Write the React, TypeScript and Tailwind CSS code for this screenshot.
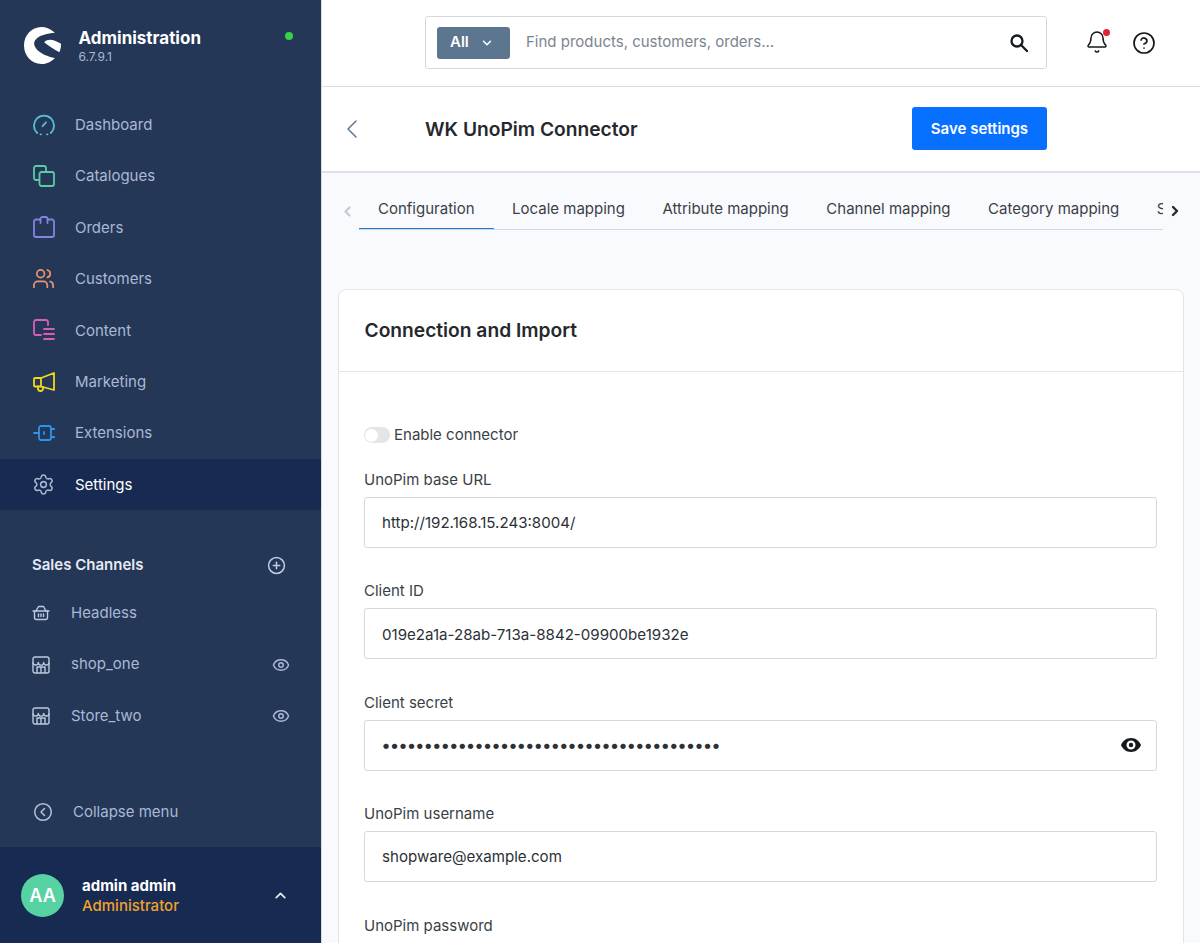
import React from "react";
import { ChevronDown, ChevronUp, Bell, CircleHelp, Settings, Users, PlusCircle, Eye } from "lucide-react";

const S = (p: { children: React.ReactNode; c: string }) => (
  <svg width="22" height="22" viewBox="0 0 22 22" fill="none" stroke={p.c} strokeWidth="1.8" strokeLinecap="round" strokeLinejoin="round">{p.children}</svg>
);

const StoreIcon = () => (
  <svg width="18" height="18" viewBox="0 0 18 18" fill="none" stroke="#bccae0" strokeWidth="1.4" strokeLinejoin="round">
    <rect x="1" y="1" width="16" height="16" rx="2" />
    <path d="M1 6.500a2.670 2.670 0 0 0 5.330 0a2.670 2.670 0 0 0 5.340 0a2.670 2.670 0 0 0 5.330 0" />
    <path d="M5 17v-6h8v6M9 11v6" />
  </svg>
);

const BasketIcon = () => (
  <svg width="18" height="18" viewBox="0 0 18 18" fill="none" stroke="#bccae0" strokeWidth="1.4" strokeLinecap="round" strokeLinejoin="round">
    <path d="M1 7h16" />
    <path d="M2.500 7v6.500a2 2 0 0 0 2 2h9a2 2 0 0 0 2-2V7" />
    <path d="M4 7l2.500-4.500h5L14 7" />
    <path d="M6.500 10v2.500M9 10v2.500M11.500 10v2.500" />
  </svg>
);

const nav: { label: string; active?: boolean; icon: React.ReactNode }[] = [
  { label: "Dashboard", icon: <S c="#58bdd6"><path d="M4.300 19A10 10 0 1 1 17.700 19" /><path d="M7.500 20.300h.5M14 20.300h.5" /><path d="M9.600 12.200l3.400-3.900" /></S> },
  { label: "Catalogues", icon: <S c="#5ccba3"><path d="M6 15H3a2 2 0 0 1-2-2V3a2 2 0 0 1 2-2h8a2 2 0 0 1 2 2v3" /><rect x="6.500" y="7" width="14.500" height="14" rx="2" /></S> },
  { label: "Orders", icon: <S c="#8383e0"><path d="M7 3.500H3a2 2 0 0 0-2 2V19a2 2 0 0 0 2 2h16a2 2 0 0 0 2-2V5.500a2 2 0 0 0-2-2h-4" /><path d="M7.500 7V3a2 2 0 0 1 2-2h3a2 2 0 0 1 2 2v4" /></S> },
  { label: "Customers", icon: <Users size={23} color="#e8956f" strokeWidth={1.8} /> },
  { label: "Content", icon: <S c="#d85fb8"><path d="M15 6V3a2 2 0 0 0-2-2H3a2 2 0 0 0-2 2v11a2 2 0 0 0 2 2h5" /><path d="M11 10h10M11 15h10M11 20h10" /></S> },
  { label: "Marketing", icon: <S c="#f2d91c"><path d="M21 2v17L8 15.500H2a1 1 0 0 1-1-1V8a1 1 0 0 1 1-1h6z" /><path d="M8 7v8.500" /><path d="M5 15.500v2a2.500 2.500 0 0 0 5 0V16" /></S> },
  { label: "Extensions", icon: <S c="#2b94ee"><rect x="6" y="4" width="12" height="14" rx="2" /><path d="M1 11h5M18 7h3.500M18 15h3.500" /><path d="M11 10v2" /></S> },
  { label: "Settings", active: true, icon: <Settings size={23} color="#a9b8cf" strokeWidth={1.6} /> },
];

function Field({ label, value, eye, mono }: { label: string; value: string; eye?: boolean; mono?: boolean }) {
  return (
    <div className="h-[111.4px] shrink-0">
      <div className="h-[28px] text-[15px] leading-[22px] text-[#3a3f46]">{label}</div>
      <div className="h-[51px] border border-[#d5d9dd] rounded-[3px] bg-white flex items-center justify-between pl-[17px] pr-[15px] text-[15.1px] text-[#2b3136]">
        <span className={mono ? "tracking-[0.4px] text-[17px] font-bold" : "pt-[2px]"}>{value}</span>
        {eye && (
          <svg width="20" height="14" viewBox="0 0 20 14"><path fill="#15191d" fillRule="evenodd" d="M10 0C5.500 0 1.700 2.800 0 7c1.700 4.200 5.500 7 10 7s8.300-2.800 10-7c-1.700-4.200-5.500-7-10-7zm0 11.500a4.500 4.500 0 1 1 0-9 4.500 4.500 0 0 1 0 9zM10 4.800a2.200 2.200 0 1 0 0 4.400 2.200 2.200 0 0 0 0-4.400z" /></svg>
        )}
      </div>
    </div>
  );
}

export default function App() {
  return (
    <div className="w-[1200px] h-[943px] overflow-hidden flex bg-[#f9fafd] text-[#2b3136]" style={{ fontFamily: "Inter, 'Liberation Sans', sans-serif" }}>
      <aside className="w-[322px] shrink-0 h-full bg-[#243757] border-r border-[#d5dae0] flex flex-col text-[#a9b9d6]">
        <div className="h-[99px] shrink-0 flex items-start pl-[24px] pr-[28px] pt-[27px]">
          <svg width="37" height="37" viewBox="73 80 110 110" fill="#fff" className="shrink-0">
            <path d="M165 97C150 85 137 80 125 80C95 80 73 105 73 135C73 165 95 190 125 190C140 190 155 183 165 172C145 168 105 155 103 128C105 110 130 100 165 97Z" />
            <path d="M133 125C145 112 165 118 183 130C183 140 182 148 178 155C160 145 145 135 133 125Z" />
          </svg>
          <div className="ml-[17.500px] flex-1">
            <div className="text-[17px] font-bold text-white leading-[20px] mt-[1px]">Administration</div>
            <div className="text-[12px] leading-[16px] mt-[1px]">6.7.9.1</div>
          </div>
          <div className="w-[8px] h-[8px] rounded-full bg-[#37d046] mt-[5px]" />
        </div>

        {nav.map((n) => (
          <div key={n.label} className={`h-[51.4px] shrink-0 flex items-center pl-[32px] text-[15px] ${n.active ? "bg-[#172a52] text-white" : ""}`}>
            <span className="w-[23px] flex justify-center">{n.icon}</span>
            <span className="ml-[20px] pt-[1px]">{n.label}</span>
          </div>
        ))}

        <div className="mt-[32.500px] h-[45px] shrink-0 flex items-center justify-between pl-[32px] pr-[35px] text-[15px] font-semibold text-[#e4eaf3]">
          <span className="pt-[1px]">Sales Channels</span>
          <PlusCircle size={19} color="#bccbe3" strokeWidth={1.9} />
        </div>
        {[
          { t: "Headless", ic: <BasketIcon /> },
          { t: "shop_one", ic: <StoreIcon />, eye: true },
          { t: "Store_two", ic: <StoreIcon />, eye: true },
        ].map((r) => (
          <div key={r.t} className="h-[51.4px] shrink-0 flex items-center pl-[32px] pr-[31px] text-[15px]">
            <span className="w-[18px] flex justify-center">{r.ic}</span>
            <span className="ml-[21px] flex-1">{r.t}</span>
            {r.eye && <Eye size={18} color="#a9b9d6" strokeWidth={2} />}
          </div>
        ))}

        <div className="mt-auto h-[52px] shrink-0 flex items-center pl-[33px] text-[15px] mb-[9px]">
          <svg width="20" height="20" viewBox="0 0 20 20" fill="none" stroke="#b4c2d8" strokeWidth="1.5" strokeLinecap="round" strokeLinejoin="round"><circle cx="10" cy="10" r="8.300" /><path d="M11.500 6.500L8 10l3.500 3.500" /></svg>
          <span className="ml-[20px]">Collapse menu</span>
        </div>
        <div className="h-[96px] shrink-0 bg-[#172a52] flex items-center pl-[21px] pr-[32px]">
          <div className="w-[43px] h-[43px] rounded-full bg-[#57d2a2] text-white font-semibold text-[18px] flex items-center justify-center">AA</div>
          <div className="ml-[18px] flex-1 pt-[1px]">
            <div className="text-[15px] font-bold text-white leading-[20px]">admin admin</div>
            <div className="text-[15px] text-[#f0a22c] leading-[20px] font-medium">Administrator</div>
          </div>
          <ChevronUp size={17} color="#dfe6f0" strokeWidth={2.6} />
        </div>
      </aside>

      <main className="flex-1 h-full flex flex-col min-w-0">
        <header className="h-[87px] shrink-0 bg-white border-b border-[#d9dde2] flex items-start pt-[16px] pl-[103px]">
          <div className="w-[622px] h-[53px] border border-[#d5d9dd] rounded-[3px] flex items-center pl-[11px] pr-[17px]">
            <div className="w-[73px] h-[32px] bg-[#5d7690] rounded-[3px] text-white text-[15px] font-semibold flex items-center pl-[13px] gap-[11px]">
              All <ChevronDown size={14} strokeWidth={2.6} />
            </div>
            <span className="ml-[16px] flex-1 text-[15px] text-[#7b858f]">Find products, customers, orders...</span>
            <svg width="20" height="20" viewBox="0 0 20 20" fill="none" stroke="#15191d" strokeWidth="2.300" strokeLinecap="round"><circle cx="8" cy="8" r="5.500" /><path d="M12.300 12.300L18 18" /></svg>
          </div>
          <div className="relative ml-[38px] mt-[14px]">
            <Bell size={24} color="#15191d" strokeWidth={1.5} />
            <span className="absolute right-[-1px] top-[-1px] w-[7px] h-[7px] rounded-full bg-[#e3212f]" />
          </div>
          <CircleHelp size={24} color="#15191d" strokeWidth={1.7} className="ml-[23px] mt-[15px]" />
        </header>

        <div className="h-[86px] shrink-0 bg-white border-b-2 border-[#dfe3e7] flex items-center pl-[24px] pb-[1px]">
          <svg width="12" height="18" viewBox="0 0 12 18" fill="none" stroke="#5d7690" strokeWidth="1.500" strokeLinecap="round" strokeLinejoin="round" className="shrink-0"><path d="M10 1L2 9l8 8" /></svg>
          <h1 className="ml-[67px] flex-1 text-[19.2px] font-semibold text-[#25292d] pt-[2px]">WK UnoPim Connector</h1>
          <button className="w-[135px] h-[43px] mr-[153px] rounded-[3px] bg-[#0870ff] text-white text-[15px] font-semibold pt-[1px]">Save settings</button>
        </div>

        <div className="flex items-start pl-[18px] h-[57px] shrink-0">
          <svg width="15" height="15" viewBox="0 0 15 15" fill="none" stroke="#c3c9d0" strokeWidth="2.200" strokeLinecap="round" strokeLinejoin="round" className="mt-[31px] shrink-0"><path d="M9.500 3.500L5.500 7.500l4 4" /></svg>
          <div className="w-[804px] shrink-0 h-[57px] border-b border-[#d3d8dd] flex overflow-hidden text-[15px] text-[#3a3f46] ml-[4px]">
            {["Configuration", "Locale mapping", "Attribute mapping", "Channel mapping", "Category mapping", "Settings"].map((t, i) => (
              <div key={t} className={`shrink-0 h-[57px] px-[19px] ${i === 0 ? "border-b-2 border-[#1a78d6]" : "ml-[-0.500px]"} pt-[25px] leading-[22px] whitespace-nowrap`}>{t}</div>
            ))}
          </div>
          <svg width="16" height="16" viewBox="0 0 16 16" fill="none" stroke="#25292d" strokeWidth="2.400" strokeLinecap="round" strokeLinejoin="round" className="mt-[30px] ml-[4px] shrink-0"><path d="M6 4l4 4-4 4" /></svg>
        </div>

        <section className="ml-[16px] w-[846px] mt-[59px] shrink-0 bg-white border border-[#e2e5e9] rounded-[8px]">
          <div className="h-[82px] border-b border-[#e2e5e9] flex items-center pl-[25.500px] text-[19.2px] font-semibold text-[#25292d]">Connection and Import</div>
          <div className="pl-[25px] pr-[26px] pt-[52px]">
            <div className="flex items-center h-[22px] text-[15px] text-[#3a3f46] mb-[23px]">
              <span className="w-[26px] h-[16px] rounded-full bg-[#e3e5e8] flex items-center pl-[1px]"><span className="w-[13px] h-[13px] rounded-full bg-white" /></span>
              <span className="ml-[4px]">Enable connector</span>
            </div>
            <div className="flex flex-col">
              <Field label="UnoPim base URL" value="http://192.168.15.243:8004/" />
              <Field label="Client ID" value="019e2a1a-28ab-713a-8842-09900be1932e" />
              <Field label="Client secret" value="••••••••••••••••••••••••••••••••••••••••" eye mono />
              <Field label="UnoPim username" value="shopware@example.com" />
              <Field label="UnoPim password" value="" />
            </div>
          </div>
        </section>
      </main>
    </div>
  );
}
